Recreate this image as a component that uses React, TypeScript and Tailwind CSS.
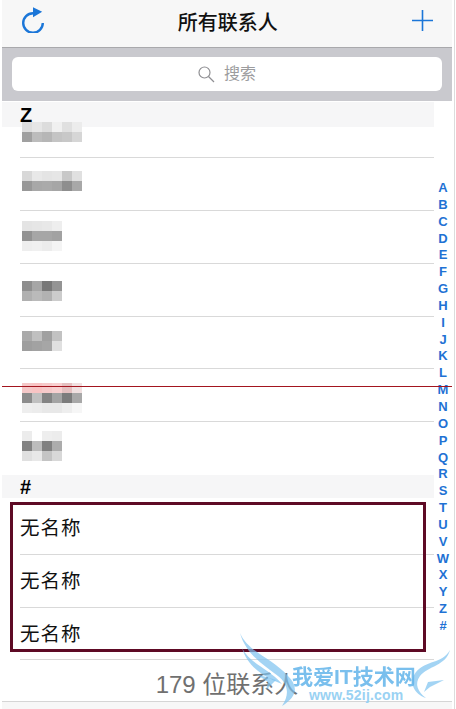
const CJK = "font-['Liberation_Sans','Noto_Sans_CJK_SC',sans-serif]";

const LETTERS = "ABCDEFGHIJKLMNOPQRSTUVWXYZ#".split("");

// blurred contact names, one string of gray values per mosaic line
const blurredRows = [
  { height: "h-[36px]", pad: "pt-[0px]", cells: [["#dedede", "#e6e6e6", "#dcdcdc", "#f0f0f0", "#e0e0e0", "#ececec"], ["#a0a0a0", "#bcbcbc", "#b6b6b6", "#c4c4c4", "#c8c8c8", "#d6d6d6"]] },
  { height: "h-[53px]", pad: "pt-[13px]", cells: [["#d8d8d8", "#e8e8e8", "#e4e4e4", "#e6e6e6", "#c8c8c8", "#e0e0e0"], ["#989898", "#a8a8a8", "#aaaaaa", "#a6a6a6", "#8e8e8e", "#a8a8a8"]] },
  { height: "h-[53px]", pad: "pt-[10px]", cells: [["#e4e4e4", "#e6e6e6", "#e8e8e8", "#eeeeee"], ["#929292", "#a6a6a6", "#a6a6a6", "#a2a2a2"], ["#eeeeee", "#f0f0f0", "#ececec", "#f4f4f4"]] },
  { height: "h-[53px]", pad: "pt-[17px]", cells: [["#8e8e8e", "#a6a6a6", "#787878", "#949494"], ["#b0b0b0", "#bababa", "#b2b2b2", "#cccccc"]] },
  { height: "h-[52px]", pad: "pt-[14px]", cells: [["#aaaaaa", "#c0c0c0", "#a0a0a0", "#c2c2c2"], ["#9e9e9e", "#a2a2a2", "#a6a6a6", "#e0e0e0"]] },
  { height: "h-[53px]", pad: "pt-[14px]", cells: [["#f4c8c8", "#f8c4c4", "#f6caca", "#f8d0d0", "#e4c0c0", "#f0e0e0"], ["#8c8c8c", "#c0c0c0", "#848484", "#a4a4a4", "#7c7c7c", "#a8a8a8"], ["#eeeeee", "#ececec", "#e8e8e8", "#e8e8e8", "#eeeeee", "#f6f6f6"]] },
  { height: "h-[53px]", pad: "pt-[9px]", cells: [["#ececec", "#ffffff", "#eeeeee", "#ececec"], ["#828282", "#bcbcbc", "#808080", "#acacac"], ["#e0e0e0", "#e8e8e8", "#c4c4c4", "#d8d8d8"]], last: true },
];

function Mosaic({ cells }: { cells: string[][] }) {
  return (
    <div className="flex flex-col blur-[0.4px]">
      {cells.map((line, i) => (
        <div key={i} className="flex">
          {line.map((color, j) => (
            <div key={j} className="h-[10px] w-[10px]" style={{ backgroundColor: color }} />
          ))}
        </div>
      ))}
    </div>
  );
}

function SectionHeader({ label, height }: { label: string; height: string }) {
  return (
    <div className={`${height} flex items-center bg-[#f6f6f7] pl-[18px] text-[20px] leading-none font-bold text-black`}>
      {label}
    </div>
  );
}

function NoName({ height, pad }: { height: string; pad: string }) {
  return (
    <div className={`${height} ${pad} ml-[18px] border-b border-[#d9d9d9]`}>
      <div className={`${CJK} text-[19.5px] leading-[28px] tracking-[1px] text-[#111]`}>无名称</div>
    </div>
  );
}

function Watermark() {
  return (
    <div className="pointer-events-none absolute top-[630px] left-[238px] h-[79px] w-[216px]">
      <svg width="216" height="79" viewBox="0 0 216 79" fill="#7cc2ef" fillOpacity="0.7">
        <path d="M2 3 C10 22 34 28 50 46 C60 56 60 66 44 76 C52 64 50 54 40 46 C24 34 8 24 2 3 Z" />
        <path d="M4 18 C12 34 30 38 44 54 C28 48 10 38 4 18 Z" />
        <path d="M18 44 L38 50 L28 60 L30 52 Z" />
        <path d="M212 20 C208 36 190 36 182 46 C176 54 180 62 188 68 C176 64 170 52 178 42 C188 30 204 34 212 20 Z" />
        <path d="M206 50 L190 52 L186 62 L192 57 Z" />
      </svg>
      <div className={`${CJK} absolute top-[35px] left-[54px] text-[21px] leading-[24px] font-bold whitespace-nowrap text-[#62b4ea] opacity-85`}>
        我爱IT技术网
      </div>
      <div className="absolute top-[57px] left-[71px] font-['Liberation_Sans',sans-serif] text-[14px] leading-[16px] font-bold tracking-[0.2px] whitespace-nowrap text-[#9ad2f3]">
        www.52ij.com
      </div>
    </div>
  );
}

export default function App() {
  return (
    <div className="relative h-[709px] w-[456px] overflow-hidden bg-white pr-[4px] pl-[2px] font-['Liberation_Sans',sans-serif]">
      {/* --- Nav bar --- */}
      <div className="flex h-[48px] items-center justify-between border-b border-[#a9a9ac] bg-[#f7f7f7] pr-[19px] pl-[19.5px]">
        <svg className="-mt-[8px]" width="22" height="26" viewBox="0 0 22 26" fill="none">
          <path d="M11 6.2 A9.8 9.8 0 1 0 20.8 16" stroke="#1b76d8" strokeWidth="2.4" />
          <path d="M11 0.3 L20.2 4.7 L11 10.3 Z" fill="#1b76d8" />
        </svg>
        <div className={`${CJK} mb-[2px] text-[20px] leading-none font-medium text-[#111]`}>所有联系人</div>
        <svg className="mb-[7px]" width="21" height="21" viewBox="0 0 21 21" fill="none">
          <path d="M10.5 0 V21 M0 10.5 H21" stroke="#1b76d8" strokeWidth="1.6" />
        </svg>
      </div>

      {/* --- Search --- */}
      <div className="h-[53px] bg-[#c9c9ce] pt-[9px] pr-[10px] pl-[10px]">
        <div className="flex h-[34px] items-center justify-center gap-[9px] rounded-[6px] bg-white">
          <svg width="17" height="17" viewBox="0 0 17 17" fill="none" stroke="#8f8f93" strokeWidth="1.2">
            <circle cx="6.5" cy="6.5" r="5.5" />
            <path d="M10.5 10.5 L16 16" />
          </svg>
          <span className={`${CJK} text-[16px] leading-none text-[#9c9c9e]`}>搜索</span>
        </div>
      </div>

      {/* --- List + index --- */}
      <div className="mt-[1px] flex">
        <div className="relative w-[432px]">
          <SectionHeader label="Z" height="h-[25px]" />
          <div className="-mt-[5px] h-0" />
          {blurredRows.map((row, i) => (
            <div key={i} className={`${row.height} ${row.pad} ml-[18px] ${row.last ? "" : "border-b border-[#d9d9d9]"}`}>
              <div className="ml-[2px]">
                <Mosaic cells={row.cells} />
              </div>
            </div>
          ))}
          <SectionHeader label="#" height="h-[23px]" />
          <NoName height="h-[57px]" pad="pt-[16px]" />
          <NoName height="h-[53px]" pad="pt-[12px]" />
          <NoName height="h-[52px]" pad="pt-[12px]" />

          {/* highlight box */}
          <div className="absolute top-[400px] left-[8px] h-[150px] w-[416px] border-[3px] border-[#5e0a25]" />
        </div>
        <div className="flex w-[18px] flex-col items-center pt-[78px]">
          {LETTERS.map((letter) => (
            <div key={letter} className="h-[16.85px] text-[13px] leading-[16.85px] font-bold text-[#1f72d4]">
              {letter}
            </div>
          ))}
        </div>
      </div>

      {/* --- Footer --- */}
      <div className={`${CJK} flex h-[42px] items-center justify-center border-b border-[#d5d5d5] pt-[9px] text-[24px] leading-none text-[#707070]`}>
        179 位联系人
      </div>
      <div className="h-[7px] bg-[#f7f7f7]" />

      {/* right edge hairline */}
      <div className="absolute top-[0px] right-[1px] h-full w-px bg-[#dcdcdc]" />
      {/* red guide line */}
      <div className="absolute top-[386px] left-[2px] h-px w-[450px] bg-[#a3151f]" />
      <Watermark />
    </div>
  );
}
